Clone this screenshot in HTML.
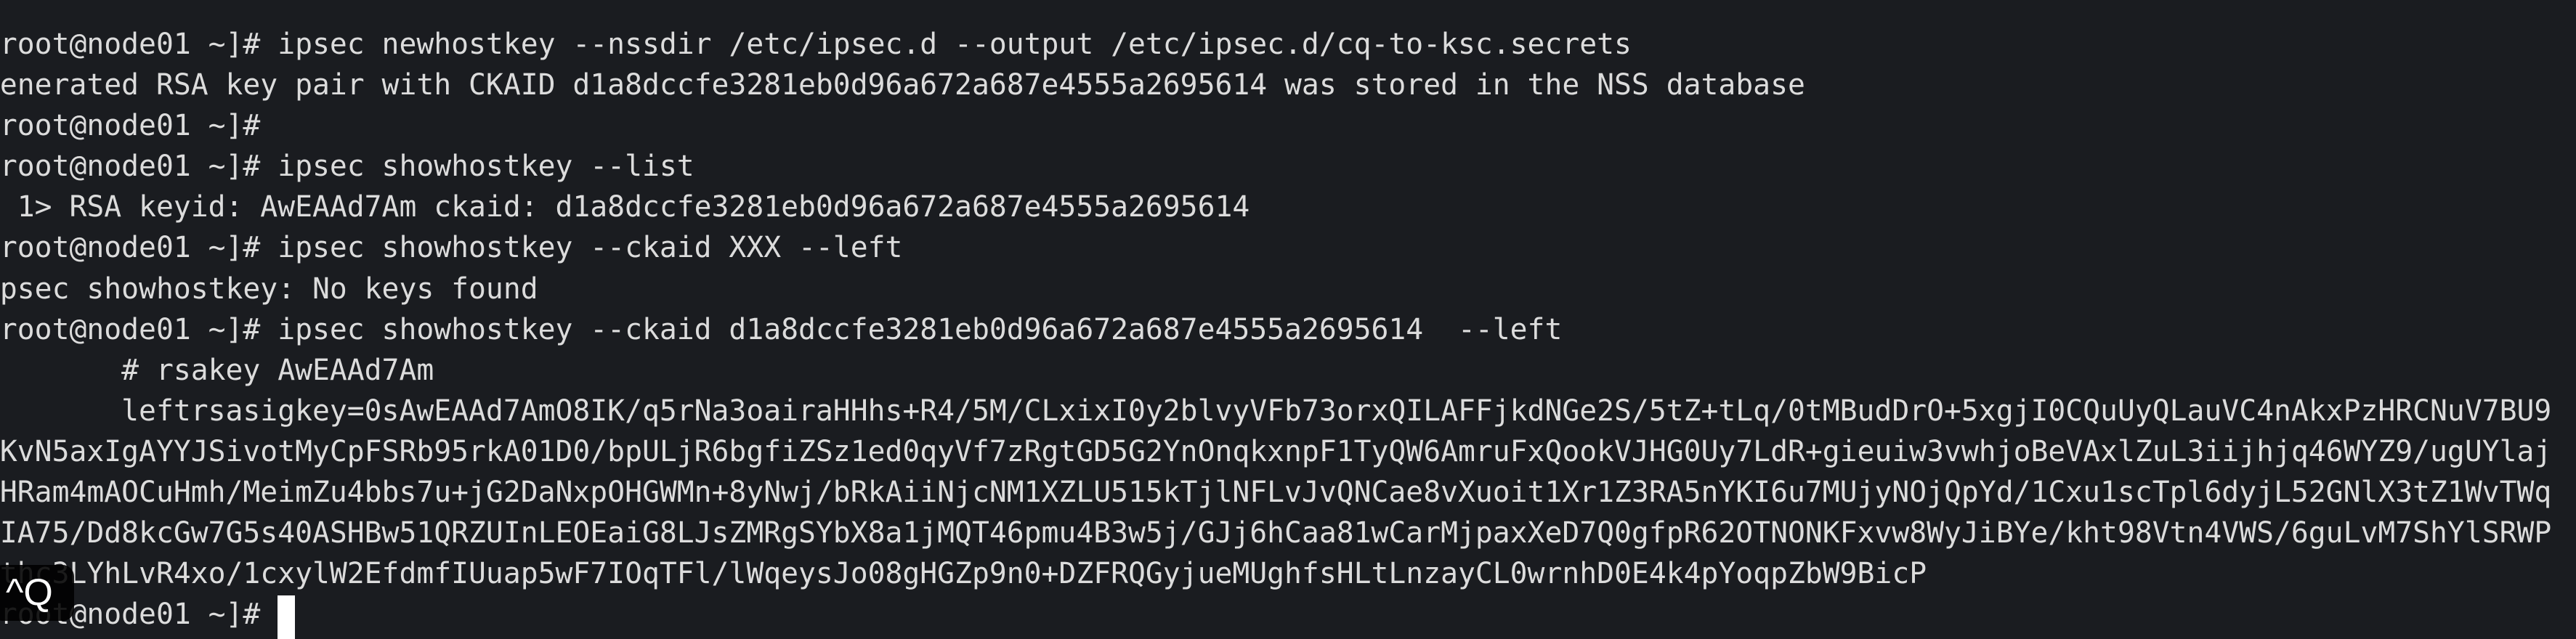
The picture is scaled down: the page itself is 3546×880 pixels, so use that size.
<!DOCTYPE html>
<html><head><meta charset="utf-8"><style>
html,body{margin:0;padding:0;background:#1a1c20;width:3546px;height:872px;overflow:hidden}
#t{position:absolute;left:-24px;top:33px;font-family:"DejaVu Sans Mono","Liberation Mono",monospace;font-size:39.7px;line-height:56.1px;color:#dcdcdc;white-space:pre}
.cur{display:inline-block;width:24px;height:60px;background:#fff;vertical-align:top;margin-top:2px}
#q{position:absolute;left:-12px;top:778px;width:114px;height:77px;background:rgba(0,0,0,0.88);border-radius:16px;color:#fff;font-family:"Liberation Sans",sans-serif;font-size:52px;line-height:77px;padding-left:20px;box-sizing:border-box}
</style></head><body>
<div id="t">[root@node01 ~]# ipsec newhostkey --nssdir /etc/ipsec.d --output /etc/ipsec.d/cq-to-ksc.secrets
Generated RSA key pair with CKAID d1a8dccfe3281eb0d96a672a687e4555a2695614 was stored in the NSS database
[root@node01 ~]#
[root@node01 ~]# ipsec showhostkey --list
  1&gt; RSA keyid: AwEAAd7Am ckaid: d1a8dccfe3281eb0d96a672a687e4555a2695614
[root@node01 ~]# ipsec showhostkey --ckaid XXX --left
ipsec showhostkey: No keys found
[root@node01 ~]# ipsec showhostkey --ckaid d1a8dccfe3281eb0d96a672a687e4555a2695614  --left
        # rsakey AwEAAd7Am
        leftrsasigkey=0sAwEAAd7AmO8IK/q5rNa3oairaHHhs+R4/5M/CLxixI0y2blvyVFb73orxQILAFFjkdNGe2S/5tZ+tLq/0tMBudDrO+5xgjI0CQuUyQLauVC4nAkxPzHRCNuV7BU9
+KvN5axIgAYYJSivotMyCpFSRb95rkA01D0/bpULjR6bgfiZSz1ed0qyVf7zRgtGD5G2YnOnqkxnpF1TyQW6AmruFxQookVJHG0Uy7LdR+gieuiw3vwhjoBeVAxlZuL3iijhjq46WYZ9/ugUYlaj
+HRam4mAOCuHmh/MeimZu4bbs7u+jG2DaNxpOHGWMn+8yNwj/bRkAiiNjcNM1XZLU515kTjlNFLvJvQNCae8vXuoit1Xr1Z3RA5nYKI6u7MUjyNOjQpYd/1Cxu1scTpl6dyjL52GNlX3tZ1WvTWq
+IA75/Dd8kcGw7G5s40ASHBw51QRZUInLEOEaiG8LJsZMRgSYbX8a1jMQT46pmu4B3w5j/GJj6hCaa81wCarMjpaxXeD7Q0gfpR62OTNONKFxvw8WyJiBYe/kht98Vtn4VWS/6guLvM7ShYlSRWP
+thc3LYhLvR4xo/1cxylW2EfdmfIUuap5wF7IOqTFl/lWqeysJo08gHGZp9n0+DZFRQGyjueMUghfsHLtLnzayCL0wrnhD0E4k4pYoqpZbW9BicP
[root@node01 ~]# <span class="cur"></span></div>
<div id="q">^Q</div>
</body></html>
